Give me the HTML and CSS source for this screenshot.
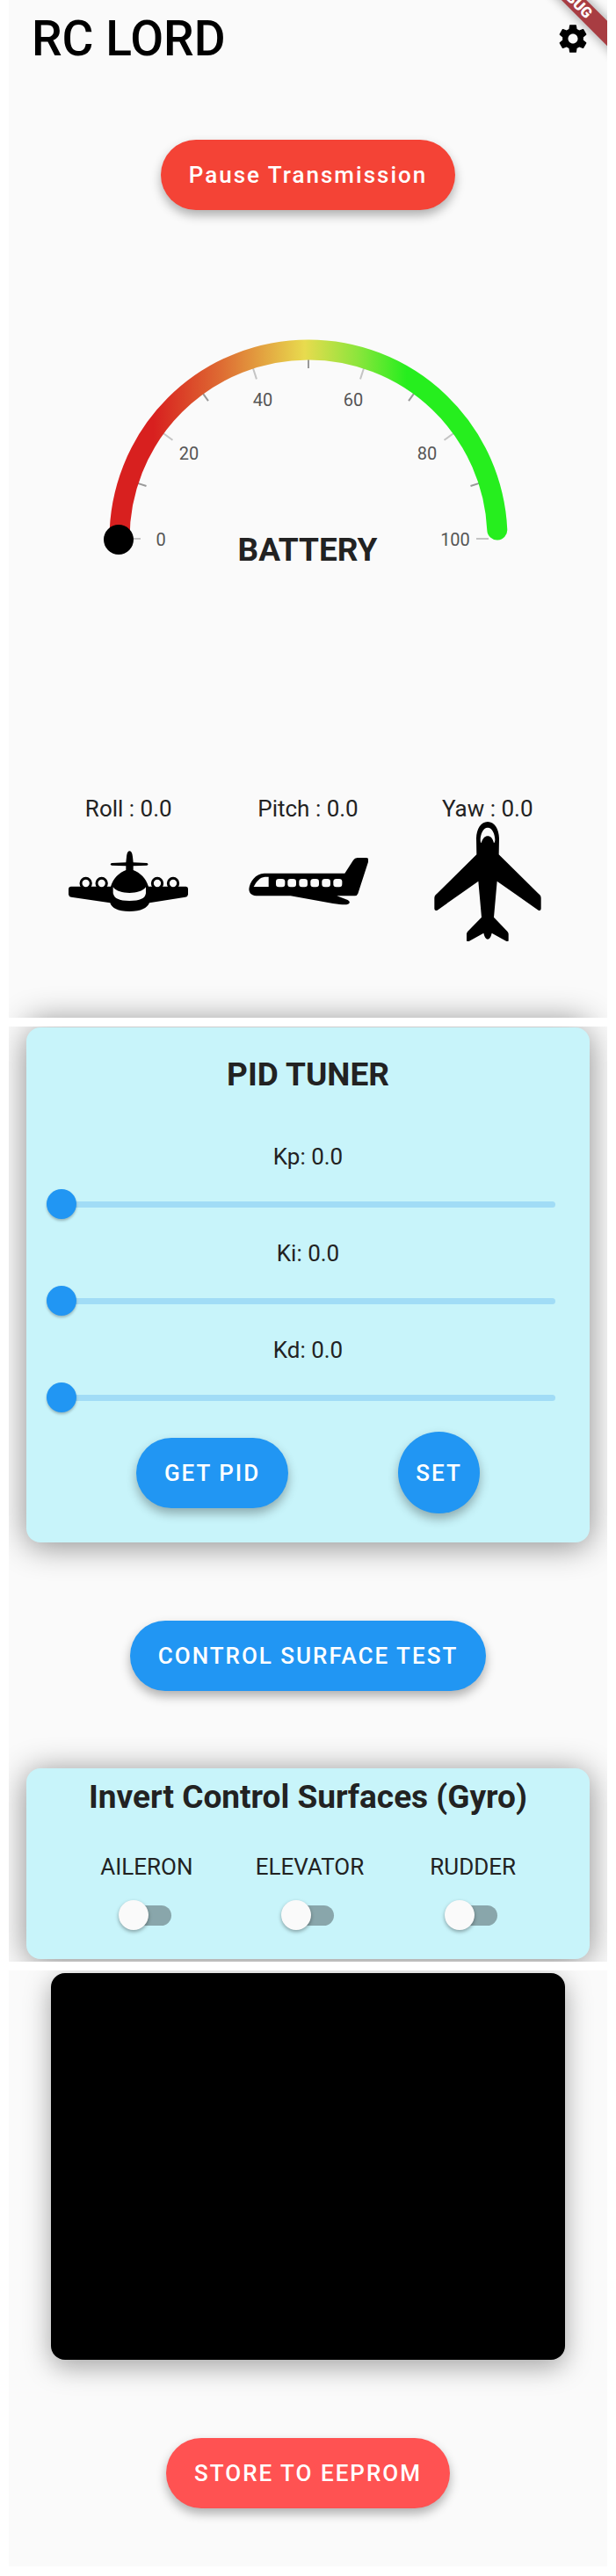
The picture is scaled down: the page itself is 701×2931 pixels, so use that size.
FILE: index.html
```html
<!DOCTYPE html>
<html lang="en">
<head>
<meta charset="utf-8">
<meta name="viewport" content="width=device-width, initial-scale=1">
<title>RC Lord</title>
<link rel="stylesheet" href="styles.css">
</head>
<body>
<main class="app">
  <section class="panel panel-status">
    <svg class="debug-banner" viewBox="0 0 60 60" aria-hidden="true">
      <path class="debug-shade" d="M-18 -40L92 70"/>
      <path class="debug-ribbon" d="M2 -20L82 60"/>
      <text class="debug-text" transform="translate(36 22) rotate(45)" text-anchor="end">BUG</text>
    </svg>
    <header class="topbar">
      <h1 class="brand">RC LORD</h1>
      <button class="icon-button" type="button" aria-label="Settings">
        <svg viewBox="0 0 24 24" width="38" height="38" aria-hidden="true"><path d="M19.430 12.980c.040-.320.070-.640.070-.980s-.030-.660-.070-.980l2.110-1.650c.190-.150.240-.420.120-.640l-2-3.460c-.120-.220-.390-.300-.610-.220l-2.490 1c-.520-.400-1.080-.730-1.690-.980l-.380-2.650C14.460 2.180 14.250 2 14 2h-4c-.250 0-.460.180-.490.420l-.380 2.650c-.610.250-1.170.590-1.690.980l-2.490-1c-.230-.090-.490 0-.610.220l-2 3.460c-.130.220-.070.490.120.640l2.110 1.650c-.040.320-.070.650-.070.980s.030.660.070.980l-2.110 1.650c-.190.150-.240.420-.120.640l2 3.460c.120.220.390.300.610.220l2.490-1c.520.400 1.080.730 1.690.980l.380 2.650c.030.240.240.420.490.420h4c.250 0 .460-.180.490-.420l.380-2.650c.610-.250 1.170-.590 1.690-.980l2.490 1c.230.090.490 0 .610-.220l2-3.460c.120-.220.070-.490-.120-.640l-2.110-1.650zM12 15.500c-1.930 0-3.500-1.570-3.500-3.500s1.570-3.500 3.500-3.500 3.500 1.570 3.500 3.500-1.570 3.500-3.500 3.500z"/></svg>
      </button>
    </header>

    <button class="pill pill-red" type="button">Pause Transmission</button>

    <svg class="gauge" viewBox="110 380 482 280" role="img" aria-label="Battery 0 of 100">
      <defs>
        <linearGradient id="charge" gradientUnits="userSpaceOnUse" x1="136" y1="0" x2="566" y2="0">
          <stop offset="9%" stop-color="#d8201f"/>
          <stop offset="27%" stop-color="#de6c33"/>
          <stop offset="49%" stop-color="#e8db4e"/>
          <stop offset="63%" stop-color="#8ce53c"/>
          <stop offset="76%" stop-color="#26ee1e"/>
        </linearGradient>
      </defs>
      <g class="tick-major">
        <path d="M146 613h14"/>
        <path d="M146 613h14" transform="rotate(36 351 613)"/>
        <path d="M146 613h14" transform="rotate(72 351 613)"/>
        <path d="M146 613h14" transform="rotate(108 351 613)"/>
        <path d="M146 613h14" transform="rotate(144 351 613)"/>
        <path d="M146 613h14" transform="rotate(180 351 613)"/>
      </g>
      <g class="tick-minor">
        <path d="M146 613h11" transform="rotate(18 351 613)"/>
        <path d="M146 613h11" transform="rotate(54 351 613)"/>
        <path d="M146 613h11" transform="rotate(90 351 613)"/>
        <path d="M146 613h11" transform="rotate(126 351 613)"/>
        <path d="M146 613h11" transform="rotate(162 351 613)"/>
      </g>
      <path class="gauge-arc" d="M136 613A215 215 0 0 1 351 398A215 215 0 0 1 565.800 603"/>
      <circle cx="135" cy="614" r="17"/>
      <g class="gauge-label">
        <text x="183" y="621">0</text>
        <text x="215" y="523">20</text>
        <text x="299" y="462">40</text>
        <text x="402" y="462">60</text>
        <text x="486" y="523">80</text>
        <text x="518" y="621">100</text>
      </g>
      <text class="gauge-title" x="350" y="638">BATTERY</text>
    </svg>

    <div class="readouts">
      <figure class="readout">
        <figcaption>Roll : 0.0</figcaption>
        <svg class="craft" viewBox="24 -60 408 408" aria-hidden="true">
          <path d="M232 40C239 40 242 50 243 60L245 79L292 81Q299 85 292 89L245 91V105C268 114 288 132 297 161H425Q432 162 432 169V188Q431 196 423 197L300 217C292 235 272 246 232 246S172 235 166 217L33 197Q25 196 24 188V169Q24 162 32 161H168C177 132 197 114 220 105V91L171 89Q163 85 171 81L220 79L222 60C223 50 226 40 232 40Z"/>
          <path class="cut" d="M176 163C187 177 208 183 232 183S277 177 288 163V184C286 202 268 210 232 210S180 202 176 184Z"/>
          <g class="engine"><circle cx="83" cy="150" r="17"/><circle cx="137" cy="150" r="17"/><circle cx="327" cy="150" r="17"/><circle cx="381" cy="150" r="17"/></g>
        </svg>
      </figure>
      <figure class="readout">
        <figcaption>Pitch : 0.0</figcaption>
        <svg class="craft" viewBox="22 -90 408 408" aria-hidden="true">
          <path d="M75 86H350L379 41Q384 33 393 33H423Q433 34 431 44L395 155Q392 163 384 163H323L360 177Q368 181 366 187Q363 193 350 193Q335 193 310 189L165 163H48Q24 161 23 140C25 116 46 86 75 86Z"/>
          <path class="cut" d="M39 132C49 112 61 100 77 98H90V132Z"/>
          <g class="cut"><rect x="115" y="105" width="31" height="28" rx="10"/><rect x="155" y="105" width="29" height="28" rx="10"/><rect x="194" y="105" width="29" height="28" rx="10"/><rect x="233" y="105" width="29" height="28" rx="10"/><rect x="272" y="105" width="29" height="28" rx="10"/><rect x="311" y="105" width="30" height="28" rx="10"/></g>
        </svg>
      </figure>
      <figure class="readout">
        <figcaption>Yaw : 0.0</figcaption>
        <svg class="craft" viewBox="6 28 408 408" aria-hidden="true">
          <path d="M210 28C234 28 248 54 249 84L248 140L388 278Q392 282 392 288V325Q391 334 383 330L242 231L231 354L277 402Q281 406 281 411V432Q281 439 274 436L224 408Q219 429 210 429T196 408L146 436Q138 439 138 432V411Q138 406 142 402L189 354L178 231L38 330Q29 334 28 325V288Q28 282 32 278L172 140L171 84C172 54 186 28 210 28Z"/>
          <path class="cut" d="M210 48C226 48 235 71 235 90Q235 99 231 101C227 84 219 77 210 77S193 84 188 101Q185 99 185 90C185 71 194 48 210 48Z"/>
        </svg>
      </figure>
    </div>
  </section>

  <section class="panel panel-tuning">
    <div class="card card-pid">
      <h2 class="card-title">PID TUNER</h2>
      <div class="sliders">
        <div class="slider-row"><label for="kp">Kp: 0.0</label><input class="slider" id="kp" type="range" min="0" max="100" value="0"></div>
        <div class="slider-row"><label for="ki">Ki: 0.0</label><input class="slider" id="ki" type="range" min="0" max="100" value="0"></div>
        <div class="slider-row"><label for="kd">Kd: 0.0</label><input class="slider" id="kd" type="range" min="0" max="100" value="0"></div>
      </div>
      <div class="card-actions">
        <button class="pill pill-blue" type="button">GET PID</button>
        <button class="pill pill-blue pill-round" type="button">SET</button>
      </div>
    </div>

    <button class="pill pill-blue" type="button">CONTROL SURFACE TEST</button>

    <div class="card card-invert">
      <h2 class="card-title">Invert Control Surfaces (Gyro)</h2>
      <div class="switches">
        <div class="switch-col"><label for="aileron">AILERON</label><input class="switch" id="aileron" type="checkbox" role="switch"></div>
        <div class="switch-col"><label for="elevator">ELEVATOR</label><input class="switch" id="elevator" type="checkbox" role="switch"></div>
        <div class="switch-col"><label for="rudder">RUDDER</label><input class="switch" id="rudder" type="checkbox" role="switch"></div>
      </div>
    </div>
  </section>

  <section class="panel panel-store">
    <div class="monitor"></div>
    <button class="pill pill-coral" type="button">STORE TO EEPROM</button>
  </section>
</main>
</body>
</html>
```
FILE: styles.css
```css
* {
  box-sizing: border-box;
}

body {
  margin: 0;
  background: #fff;
  color: #222;
  font-family: Roboto, "Liberation Sans", sans-serif;
  font-size: 26px;
  line-height: 30px;
}

h1,
h2,
figure {
  margin: 0;
}

button {
  border: 0;
  font: inherit;
  cursor: pointer;
}

.app {
  display: flex;
  flex-direction: column;
  gap: 10px;
  padding: 0 10px 11px;
}

.panel {
  position: relative;
  display: flex;
  flex-direction: column;
  align-items: center;
  overflow: hidden;
  background: #fafafa;
}

/* Status */

.panel-status {
  padding-bottom: 87px;
}

/* Shadow of the card that starts right below this panel */
.panel-status::after {
  content: "";
  position: absolute;
  top: 100%;
  left: 20px;
  right: 20px;
  height: 80px;
  border-radius: 16px;
  box-shadow: 0 4px 36px rgba(0, 0, 0, 0.45);
}

.debug-banner {
  position: absolute;
  top: 0;
  right: 0;
  width: 60px;
  height: 60px;
  overflow: visible;
}

.debug-ribbon {
  stroke: #a83d42;
  stroke-width: 20px;
}

.debug-shade {
  stroke: #000;
  stroke-width: 24px;
  opacity: 0.3;
  filter: blur(6px);
}

.debug-text {
  fill: #fff;
  font-size: 17px;
  font-weight: 900;
}

.topbar {
  display: flex;
  align-items: center;
  justify-content: space-between;
  align-self: stretch;
  height: 88px;
  padding: 0 20px 0 26px;
}

.brand {
  color: #000;
  font-size: 55px;
  font-weight: 500;
  line-height: 64px;
}

.icon-button {
  display: flex;
  padding: 0;
  background: none;
}

.pill {
  min-height: 80px;
  padding: 0 32px;
  border-radius: 40px;
  color: #fff;
  font-weight: 500;
  letter-spacing: 2px;
  box-shadow: 0 6px 12px rgba(0, 0, 0, 0.3);
}

.pill-red {
  margin-top: 71px;
  background: #f44336;
}

.pill-blue {
  background: #2196f3;
}

.pill-coral {
  background: #ff5252;
}

.pill-round {
  width: 93px;
  height: 93px;
  padding: 0;
  border-radius: 50%;
}

.gauge {
  width: 482px;
  max-width: 100%;
  margin-top: 141px;
}

.gauge-arc {
  fill: none;
  stroke: url(#charge);
  stroke-width: 23px;
  stroke-linecap: round;
}

.tick-major {
  stroke: #c4c4c4;
  stroke-width: 2px;
}

.tick-minor {
  stroke: #999;
  stroke-width: 2px;
}

.gauge-label {
  fill: #555;
  font-size: 20px;
  text-anchor: middle;
}

.gauge-title {
  fill: #222;
  font-size: 37px;
  font-weight: 700;
  text-anchor: middle;
}

.readouts {
  display: flex;
  justify-content: space-evenly;
  align-self: stretch;
  margin-top: 245px;
}

.readout {
  display: flex;
  flex-direction: column;
  align-items: center;
}

.craft {
  width: 136px;
  height: 136px;
}

.cut {
  fill: #fafafa;
}

.engine {
  fill: #fafafa;
  stroke: #000;
  stroke-width: 9px;
}

/* Tuning */

.panel-tuning {
  padding: 1px 20px 3px;
}

.card {
  align-self: stretch;
  border-radius: 16px;
  background: #c8f4fa;
  box-shadow: 0 4px 36px rgba(0, 0, 0, 0.45);
}

.card-title {
  font-size: 37px;
  font-weight: 700;
  line-height: 42px;
  text-align: center;
}

.card-pid {
  margin-bottom: 89px;
  padding: 33px 0;
}

.sliders {
  display: flex;
  flex-direction: column;
  gap: 24px;
  margin-top: 57px;
}

.slider-row {
  display: flex;
  flex-direction: column;
  gap: 22px;
  text-align: center;
}

.slider {
  height: 34px;
  margin: 0 39px 0 23px;
  appearance: none;
  background: none;
}

.slider::-webkit-slider-runnable-track {
  height: 7px;
  border-radius: 4px;
  background: #a1dcf6;
}

.slider::-webkit-slider-thumb {
  width: 34px;
  height: 34px;
  margin-top: -14px;
  appearance: none;
  border-radius: 50%;
  background: #2196f3;
  box-shadow: 0 2px 3px rgba(0, 0, 0, 0.25);
}

.card-actions {
  display: flex;
  align-items: center;
  justify-content: space-evenly;
  margin-top: 22px;
}

.card-invert {
  margin-top: 88px;
  padding: 12px 42px 33px;
}

.switches {
  display: grid;
  grid-template-columns: repeat(3, 1fr);
  margin-top: 43px;
}

.switch-col {
  display: flex;
  flex-direction: column;
  align-items: center;
  gap: 23px;
}

.switch-col label {
  padding-left: 4px;
}

.switch {
  display: grid;
  align-items: center;
  width: 60px;
  height: 34px;
  margin: 0;
  appearance: none;
}

.switch::before,
.switch::after {
  content: "";
  grid-area: 1 / 1;
}

.switch::before {
  height: 23px;
  margin-left: 6px;
  border-radius: 12px;
  background: #89a6ab;
}

.switch::after {
  width: 34px;
  height: 34px;
  border-radius: 50%;
  background: #fafafa;
  box-shadow: 0 2px 4px rgba(0, 0, 0, 0.35);
}

.switch:checked::after {
  justify-self: end;
}

/* Store */

.panel-store {
  padding: 3px 48px 66px;
}

.monitor {
  align-self: stretch;
  height: 440px;
  margin-bottom: 89px;
  border-radius: 16px;
  background: #000;
  box-shadow: 0 8px 30px rgba(0, 0, 0, 0.35);
}
```
